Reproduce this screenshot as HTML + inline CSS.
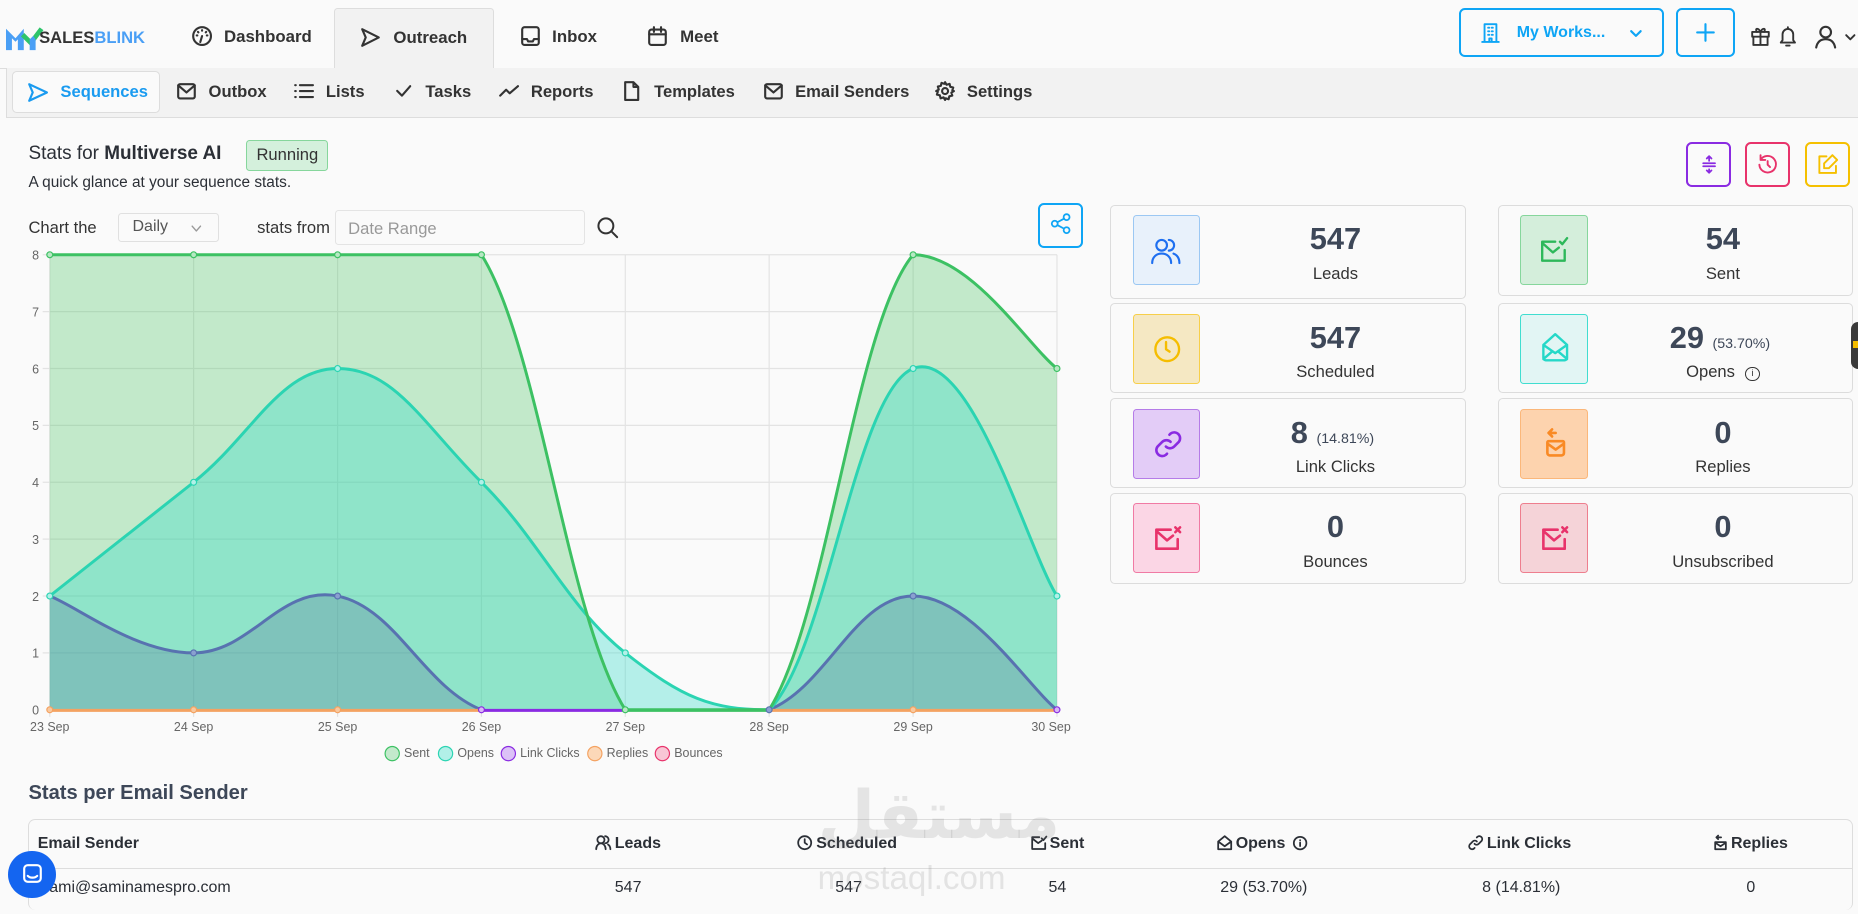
<!DOCTYPE html>
<html><head><meta charset="utf-8">
<style>
*{box-sizing:border-box;margin:0;padding:0}
html,body{width:1858px;height:914px;overflow:hidden;background:#fafafa}
#w{zoom:1.18495;width:1568px;height:771px;position:relative;font-family:"Liberation Sans",sans-serif;color:#2b2f36}
.a{position:absolute}
.t{font-size:14.2px;font-weight:bold;color:#333;position:absolute}
svg{overflow:visible}
.ic{position:absolute;fill:none;stroke:#333;stroke-width:1.8;stroke-linecap:round;stroke-linejoin:round}
.card{position:absolute;width:300px;border:1px solid #dcdcdc;border-radius:4px;background:#fafafa}
.ib{position:absolute;left:18px;top:8px;width:57px;height:59px;border-radius:3px;border:1.5px solid}
.ib svg{position:absolute;left:16px;top:17px}
.num{position:absolute;left:80px;right:0;text-align:center;top:13px;font-size:26px;font-weight:bold;color:#3d4758}
.num small{font-size:12px;font-weight:normal}
.lab{position:absolute;left:80px;right:0;text-align:center;top:49px;font-size:14px;color:#333}
.th{position:absolute;top:13px;font-size:13.5px;font-weight:bold;color:#2b2f36;white-space:nowrap}
.th svg{display:inline-block;vertical-align:-2px;margin-right:3px;fill:none;stroke:#2b2f36;stroke-width:1.5;stroke-linecap:round;stroke-linejoin:round}
.td{position:absolute;top:50px;font-size:13.5px;color:#2b2f36}
</style></head><body><div id="w">

<!-- top nav -->
<div class="a" style="left:0;top:57px;width:1568px;border-top:1px solid #ddd"></div>
<svg class="a" style="left:5px;top:20px" width="30" height="22" viewBox="0 0 30 22"><path d="M0 22V4l8 8 7-8v18h-5V13l-2 2-3-3v10z" fill="#4a9ff5"/><path d="M14 9l7 7L30 4" stroke="#2ec46a" stroke-width="4" fill="none"/><path d="M20 13l3-3 2 3v9h-5z" fill="#4a9ff5"/></svg>
<div class="a" style="left:33px;top:24px;font-size:14px;font-weight:900;letter-spacing:0"><span style="color:#333">SALES</span><span style="color:#4a9ff5">BLINK</span></div>
<svg class="ic" style="left:162px;top:22px" width="17" height="17" viewBox="0 0 17 17"><circle cx="8.5" cy="8.5" r="7.5"/><path d="M8.5 8.5l-1.5 5M4 8h.5M12.5 8h.5M8.5 3.5v.5M5 5l.4.4M12 5l-.4.4"/></svg>
<div class="t" style="left:189px;top:23px">Dashboard</div>
<div class="a" style="left:282px;top:7px;width:135px;height:51px;background:#f2f2f2;border:1px solid #ddd;border-bottom:none;border-radius:3px 3px 0 0"></div>
<svg class="ic" style="left:305px;top:24px" width="16" height="16" viewBox="0 0 16 16"><path d="M1 1l14 7-14 7 3-7z"/></svg>
<div class="t" style="left:332px;top:24px">Outreach</div>
<svg class="ic" style="left:440px;top:22px" width="16" height="17" viewBox="0 0 16 17"><rect x="1" y="1" width="14" height="15" rx="2"/><path d="M1 11h4l1 2h4l1-2h4"/></svg>
<div class="t" style="left:466px;top:23px">Inbox</div>
<svg class="ic" style="left:547px;top:22px" width="16" height="17" viewBox="0 0 16 17"><rect x="1" y="3" width="14" height="13" rx="2"/><path d="M1 7h14M5 1v4M11 1v4"/></svg>
<div class="t" style="left:574px;top:23px">Meet</div>

<div class="a" style="left:1231px;top:7px;width:173px;height:41px;border:2.5px solid #0ea5f5;border-radius:5px"></div>
<svg class="ic" style="left:1250px;top:19px;stroke:#0ea5f5;stroke-width:1.6" width="16" height="17" viewBox="0 0 16 17"><path d="M3 16V1h10v15M1 16h14M6 4h1M9 4h1M6 7h1M9 7h1M6 10h1M9 10h1M7 16v-3h2v3"/></svg>
<div class="a" style="left:1280px;top:20px;font-size:13.5px;font-weight:bold;color:#0ea5f5">My Works...</div>
<svg class="ic" style="left:1376px;top:25px;stroke:#0ea5f5" width="10" height="6" viewBox="0 0 10 6"><path d="M1 1l4 4 4-4"/></svg>
<div class="a" style="left:1414px;top:7px;width:50px;height:41px;border:2.5px solid #0ea5f5;border-radius:5px"></div>
<svg class="ic" style="left:1431px;top:19px;stroke:#0ea5f5" width="16" height="16" viewBox="0 0 16 16"><path d="M8 1v14M1 8h14"/></svg>
<svg class="ic" style="left:1478px;top:22px;stroke-width:1.6" width="16" height="17" viewBox="0 0 16 17"><rect x="1" y="5" width="14" height="4"/><path d="M2 9v7h12V9M8 5v11M8 5C6 1 3 2 5 5M8 5c2-4 5-3 3 0"/></svg>
<svg class="ic" style="left:1501px;top:22px;stroke-width:1.6" width="15" height="18" viewBox="0 0 15 18"><path d="M3 12V7a4.5 4.5 0 019 0v5l1.5 2h-12zM6 16.5h3M7.5 1v1"/></svg>
<svg class="ic" style="left:1532px;top:21px" width="18" height="20" viewBox="0 0 18 20"><circle cx="9" cy="6" r="4.5"/><path d="M1 19c1-5 4-7 8-7s7 2 8 7"/></svg>
<svg class="ic" style="left:1557px;top:29px;stroke-width:1.6" width="9" height="6" viewBox="0 0 9 6"><path d="M1 1l3.5 3.5L8 1"/></svg>

<!-- sub nav -->
<div class="a" style="left:5px;top:57px;width:1563px;height:43px;background:#f2f2f2;border-left:1px solid #ddd;border-bottom:1px solid #ddd"></div>
<div class="a" style="left:10px;top:60px;width:125px;height:35px;background:#fafafa;border:1px solid #ddd;border-radius:4px"></div>
<svg class="ic" style="left:24px;top:70px;stroke:#1a9bf0" width="17" height="16" viewBox="0 0 17 16"><path d="M1 1l15 7-15 7 3-7z"/></svg>
<div class="t" style="left:51px;top:69px;color:#1a9bf0;font-size:14px">Sequences</div>
<svg class="ic" style="left:149px;top:70px" width="16" height="14" viewBox="0 0 16 14"><rect x="1" y="1" width="14" height="12" rx="1.5"/><path d="M1 2l7 6 7-6"/></svg>
<div class="t" style="left:176px;top:69px;font-size:14px">Outbox</div>
<svg class="ic" style="left:248px;top:71px" width="17" height="12" viewBox="0 0 17 12"><path d="M5 1h11M5 6h11M5 11h11M1 1h.5M1 6h.5M1 11h.5"/></svg>
<div class="t" style="left:275px;top:69px;font-size:14px">Lists</div>
<svg class="ic" style="left:334px;top:72px" width="13" height="10" viewBox="0 0 13 10"><path d="M1 5l4 4 7-8"/></svg>
<div class="t" style="left:359px;top:69px;font-size:14px">Tasks</div>
<svg class="ic" style="left:421px;top:72px" width="18" height="10" viewBox="0 0 18 10"><path d="M1 9l5-5 3 3 7-6"/></svg>
<div class="t" style="left:448px;top:69px;font-size:14px">Reports</div>
<svg class="ic" style="left:527px;top:68px" width="13" height="17" viewBox="0 0 13 17"><path d="M1 1h7l4 4v11H1z M8 1v4h4"/></svg>
<div class="t" style="left:552px;top:69px;font-size:14px">Templates</div>
<svg class="ic" style="left:645px;top:70px" width="16" height="14" viewBox="0 0 16 14"><rect x="1" y="1" width="14" height="12" rx="1.5"/><path d="M1 2l7 6 7-6"/></svg>
<div class="t" style="left:671px;top:69px;font-size:14px">Email Senders</div>
<svg class="ic" style="left:789px;top:68px" width="17" height="17" viewBox="0 0 17 17"><circle cx="8.5" cy="8.5" r="2.5"/><path d="M8.5 1l1.3 2.2 2.5-.8.6 2.5 2.5.6-.8 2.5L16 8.5l-2.2 1.3.8 2.5-2.5.6-.6 2.5-2.5-.8L8.5 16l-1.3-2.2-2.5.8-.6-2.5-2.5-.6.8-2.5L1 8.5l2.2-1.3-.8-2.5 2.5-.6.6-2.5 2.5.8z"/></svg>
<div class="t" style="left:816px;top:69px;font-size:14px">Settings</div>

<!-- header -->
<div class="a" style="left:24px;top:121px;font-size:16px;color:#2b2f36">Stats for <b>Multiverse AI</b></div>
<div class="a" style="left:208px;top:118px;width:69px;height:26px;background:#d4f0dc;border:1.5px solid #86d69c;border-radius:3px;font-size:14px;text-align:center;line-height:23px;color:#333">Running</div>
<div class="a" style="left:24px;top:147px;font-size:13px;color:#2b2f36">A quick glance at your sequence stats.</div>

<div class="a" style="left:1423px;top:120px;width:38px;height:38px;border:2px solid #8a2be2;border-radius:5px"></div>
<svg class="ic" style="left:1436px;top:131px;stroke:#8a2be2;stroke-width:1.5" width="12" height="16" viewBox="0 0 12 16"><path d="M1 7h10M1 9.5h10M6 1v4M4 3l2-2 2 2M6 15v-3M4 13l2 2 2-2"/></svg>
<div class="a" style="left:1473px;top:120px;width:38px;height:38px;border:2px solid #e8336b;border-radius:5px"></div>
<svg class="ic" style="left:1483px;top:130px;stroke:#e8336b;stroke-width:1.6" width="18" height="18" viewBox="0 0 18 18"><path d="M3 5a7 7 0 11-1 4M3 1v4h4M9 6v3l2 2"/></svg>
<div class="a" style="left:1523px;top:120px;width:38px;height:38px;border:2px solid #f5c000;border-radius:5px"></div>
<svg class="ic" style="left:1533px;top:130px;stroke:#f5c000;stroke-width:1.6" width="18" height="18" viewBox="0 0 18 18"><path d="M8 2H2v14h14v-6M13 1l4 4-7 7H6V8z"/></svg>

<!-- chart controls -->
<div class="a" style="left:24px;top:184px;font-size:14px;color:#333">Chart the</div>
<div class="a" style="left:100px;top:180px;width:85px;height:24px;border:1px solid #e0e0e0;border-radius:3px;font-size:13.5px;color:#555;padding:3px 0 0 11px">Daily</div>
<svg class="ic" style="left:161px;top:190px;stroke:#999;stroke-width:1.2" width="9" height="6" viewBox="0 0 9 6"><path d="M1 1l3.5 4L8 1"/></svg>
<div class="a" style="left:217px;top:184px;font-size:14px;color:#333">stats from</div>
<div class="a" style="left:283px;top:177px;width:211px;height:30px;border:1px solid #e4e4e4;border-radius:3px;background:#fafafa;font-size:14px;color:#999;padding:7px 0 0 10px">Date Range</div>
<svg class="ic" style="left:504px;top:183px;stroke-width:1.7" width="18" height="18" viewBox="0 0 18 18"><circle cx="7.5" cy="7.5" r="6.3"/><path d="M12 12l5 5"/></svg>
<div class="a" style="left:876px;top:171px;width:38px;height:38px;border:2px solid #0ea5f5;border-radius:5px"></div>
<svg class="ic" style="left:886px;top:180px;stroke:#0ea5f5;stroke-width:1.5" width="18" height="18" viewBox="0 0 18 18"><circle cx="4" cy="9" r="2.5"/><circle cx="14" cy="3.5" r="2.5"/><circle cx="14" cy="14.5" r="2.5"/><path d="M6.2 7.8l5.6-3M6.2 10.2l5.6 3"/></svg>

<!-- chart -->
<svg class="a" style="left:0;top:0" width="930" height="650" viewBox="0 0 930 650">
<g stroke="#e3e3e3" stroke-width="1">
<path d="M36 215H892M36 263H892M36 311H892M36 359H892M36 407H892M36 455H892M36 503H892M36 551H892"/>
<path d="M42 215V605M163.4 215V605M284.9 215V605M406.3 215V605M527.7 215V605M649.1 215V605M770.6 215V605M892 215V605"/>
</g>
<g font-family="Liberation Sans" font-size="10.5" fill="#666" text-anchor="end">
<text x="33" y="219">8</text><text x="33" y="267">7</text><text x="33" y="315">6</text><text x="33" y="363">5</text><text x="33" y="411">4</text><text x="33" y="459">3</text><text x="33" y="507">2</text><text x="33" y="555">1</text><text x="33" y="603">0</text>
</g>
<g font-family="Liberation Sans" font-size="10.5" fill="#666" text-anchor="middle">
<text x="42" y="617">23 Sep</text><text x="163.4" y="617">24 Sep</text><text x="284.9" y="617">25 Sep</text><text x="406.3" y="617">26 Sep</text><text x="527.7" y="617">27 Sep</text><text x="649.1" y="617">28 Sep</text><text x="770.6" y="617">29 Sep</text><text x="887" y="617">30 Sep</text>
</g>
<path d="M42 215L406.3 215C454.9 291.8 479.1 522.2 527.7 599L649.1 599C697.7 522.2 722 272.6 770.6 215C819.2 215 867.7 291.8 892 311L892 599L42 599Z" fill="rgba(52,190,80,0.28)"/>
<path d="M42 503C66.3 483.8 114.8 445.4 163.4 407C212 368.6 236.3 311 284.9 311C333.5 311 357.7 359 406.3 407C454.9 455 479.1 512.6 527.7 551C576.3 589.4 600.5 599 649.1 599C697.7 551 722 330.2 770.6 311C819.2 291.8 867.7 464.6 892 503L892 599L42 599Z" fill="rgba(40,220,200,0.33)"/>
<path d="M42 503C66.3 512.6 114.8 551 163.4 551C212 551 236.3 493.4 284.9 503C333.5 512.6 357.7 579.8 406.3 599L649.1 599C697.7 579.8 722 503 770.6 503C819.2 503 867.7 579.8 892 599L42 599Z" fill="rgba(80,97,149,0.25)"/>
<path d="M42 503C66.3 512.6 114.8 551 163.4 551C212 551 236.3 493.4 284.9 503C333.5 512.6 357.7 579.8 406.3 599" fill="none" stroke="#5872b0" stroke-width="2.5"/>
<path d="M649.1 599C697.7 579.8 722 503 770.6 503C819.2 503 867.7 579.8 892 599" fill="none" stroke="#5872b0" stroke-width="2.5"/>
<path d="M42 503C66.3 483.8 114.8 445.4 163.4 407C212 368.6 236.3 311 284.9 311C333.5 311 357.7 359 406.3 407C454.9 455 479.1 512.6 527.7 551C576.3 589.4 600.5 599 649.1 599C697.7 551 722 330.2 770.6 311C819.2 291.8 867.7 464.6 892 503" fill="none" stroke="#2bd4b2" stroke-width="2.5"/>
<path d="M42 215L406.3 215C454.9 291.8 479.1 522.2 527.7 599L649.1 599C697.7 522.2 722 272.6 770.6 215C819.2 215 867.7 291.8 892 311" fill="none" stroke="#3cc163" stroke-width="2.5"/>
<path d="M42 599.5H406M649 599.5H892" stroke="#f4a261" stroke-width="2.5"/>
<path d="M406 599.5H527.7" stroke="#8a2be2" stroke-width="2.5"/>
<path d="M527.7 599.5H649" stroke="#3cc163" stroke-width="2.5"/>
<g fill="#b7e8c4" stroke="#3cc163" stroke-width="1">
<circle cx="42" cy="215" r="2.5"/><circle cx="163.4" cy="215" r="2.5"/><circle cx="284.9" cy="215" r="2.5"/><circle cx="406.3" cy="215" r="2.5"/><circle cx="770.6" cy="215" r="2.5"/><circle cx="892" cy="311" r="2.5"/><circle cx="527.7" cy="599" r="2.5"/></g>
<g fill="#b2f0e8" stroke="#2bd4b2" stroke-width="1">
<circle cx="163.4" cy="407" r="2.5"/><circle cx="284.9" cy="311" r="2.5"/><circle cx="406.3" cy="407" r="2.5"/><circle cx="527.7" cy="551" r="2.5"/><circle cx="770.6" cy="311" r="2.5"/><circle cx="892" cy="503" r="2.5"/><circle cx="42" cy="503" r="2.5"/></g>
<g fill="#8aa0d0" stroke="#5872b0" stroke-width="1"><circle cx="163.4" cy="551" r="2.5"/><circle cx="284.9" cy="503" r="2.5"/><circle cx="770.6" cy="503" r="2.5"/><circle cx="649.1" cy="599" r="2.5"/></g>
<g fill="#f8c9a0" stroke="#f4a261" stroke-width="1"><circle cx="42" cy="599" r="2.5"/><circle cx="163.4" cy="599" r="2.5"/><circle cx="284.9" cy="599" r="2.5"/><circle cx="770.6" cy="599" r="2.5"/></g>
<g fill="#d8b8f5" stroke="#8a2be2" stroke-width="1"><circle cx="406.3" cy="599" r="2.5"/><circle cx="892" cy="599" r="2.5"/></g>
<g font-family="Liberation Sans" font-size="10.5" fill="#666">
<circle cx="331" cy="636" r="6" fill="#c3e9cc" stroke="#3cc163"/><text x="341" y="639">Sent</text>
<circle cx="376" cy="636" r="6" fill="#b2f0e8" stroke="#2bd4b2"/><text x="386" y="639">Opens</text>
<circle cx="429" cy="636" r="6" fill="#dcc2f7" stroke="#8a2be2"/><text x="439" y="639">Link Clicks</text>
<circle cx="502" cy="636" r="6" fill="#fcd8b8" stroke="#f4a261"/><text x="512" y="639">Replies</text>
<circle cx="559" cy="636" r="6" fill="#f8c6d5" stroke="#e8336b"/><text x="569" y="639">Bounces</text>
</g>
</svg>

<!-- cards -->
<div class="card" style="left:937px;top:173px;height:79px"><div class="ib" style="background:#e8f1fb;border-color:#9cc8f3"><svg class="ic" style="stroke:#1e6ff0;stroke-width:1.8;left:15px" width="26" height="24" viewBox="0 0 26 24"><circle cx="9" cy="7" r="4.5"/><path d="M1 22c0-5 3.5-8 8-8s8 3 8 8M15 2.5a4.5 4.5 0 010 9M19 14c3 1 5 4 5 8"/></svg></div><div class="num">547</div><div class="lab">Leads</div></div>
<div class="card" style="left:1264px;top:173px;height:77px"><div class="ib" style="background:#d4eedb;border-color:#86d69c"><svg class="ic" style="stroke:#2db85a;stroke-width:2;left:17px" width="24" height="22" viewBox="0 0 24 22"><path d="M12 4H1v16h19V11M1 5l9 8 5-4M16 4l2 2 4-5"/></svg></div><div class="num">54</div><div class="lab">Sent</div></div>
<div class="card" style="left:937px;top:256px;height:76px"><div class="ib" style="background:#f5e8c3;border-color:#f7cf4a"><svg class="ic" style="stroke:#f5bd00;stroke-width:2;left:16px" width="24" height="24" viewBox="0 0 24 24"><circle cx="12" cy="12" r="10"/><path d="M11 6v6l3 2"/></svg></div><div class="num">547</div><div class="lab">Scheduled</div></div>
<div class="card" style="left:1264px;top:256px;height:76px"><div class="ib" style="background:#e2f5f4;border-color:#40ddd0"><svg class="ic" style="stroke:#25d8c8;stroke-width:2;left:17px;top:15px" width="24" height="24" viewBox="0 0 24 24"><path d="M2 10l10-9 10 9v11a2 2 0 01-2 2H4a2 2 0 01-2-2zM2 10l10 7 10-7M2 22l7-6M22 22l-7-6"/></svg></div><div class="num" style="left:75px">29 <small>(53.70%)</small></div><div class="lab">Opens <span style="display:inline-block;width:12px;height:12px;border:1.3px solid #333;border-radius:50%;font-size:8px;line-height:10px;vertical-align:1px;margin-left:5px">i</span></div></div>
<div class="card" style="left:937px;top:336px;height:76px"><div class="ib" style="background:#e3ccf7;border-color:#b57ce8"><svg class="ic" style="stroke:#8a2be2;stroke-width:2.2;left:17px;top:17px" width="24" height="24" viewBox="0 0 24 24"><path d="M10 14a5 5 0 007 0l4-4a5 5 0 00-7-7l-1 1M14 10a5 5 0 00-7 0l-4 4a5 5 0 007 7l1-1"/></svg></div><div class="num" style="left:75px">8 <small>(14.81%)</small></div><div class="lab">Link Clicks</div></div>
<div class="card" style="left:1264px;top:336px;height:76px"><div class="ib" style="background:#fdd3ae;border-color:#fbb77a"><svg class="ic" style="stroke:#f98a25;stroke-width:2.2;left:20px;top:15px" width="18" height="26" viewBox="0 0 18 26"><path d="M9 5H3M6 2L3 5l3 3M3 12h12a1 1 0 011 1v9a2 2 0 01-2 2H4a2 2 0 01-2-2v-9a1 1 0 011-1zM2 14l7 5 7-5"/></svg></div><div class="num">0</div><div class="lab">Replies</div></div>
<div class="card" style="left:937px;top:416px;height:77px"><div class="ib" style="background:#fbd6e5;border-color:#f07aa4"><svg class="ic" style="stroke:#e8336b;stroke-width:2.2;left:17px" width="24" height="24" viewBox="0 0 24 24"><path d="M14 4H2v16h18V12M2 5l9 8 5-4M18 2l4 4M22 2l-4 4"/></svg></div><div class="num">0</div><div class="lab">Bounces</div></div>
<div class="card" style="left:1264px;top:416px;height:77px"><div class="ib" style="background:#f5d3d8;border-color:#ee7e8e"><svg class="ic" style="stroke:#e8336b;stroke-width:2.2;left:17px" width="24" height="24" viewBox="0 0 24 24"><path d="M14 4H2v16h18V12M2 5l9 8 5-4M18 2l4 4M22 2l-4 4"/></svg></div><div class="num">0</div><div class="lab">Unsubscribed</div></div>
<div class="a" style="left:1562px;top:272px;width:10px;height:39px;background:#3a3a3a;border-radius:6px 0 0 6px"></div>
<div class="a" style="left:1564px;top:288px;width:4px;height:6px;background:#f5bd00"></div>

<!-- table -->
<div class="a" style="left:24px;top:660px;font-size:17px;font-weight:bold;color:#3d4758">Stats per Email Sender</div>
<div class="a" style="left:24px;top:691px;width:1540px;height:77px;border:1px solid #ddd;border-radius:6px;border-bottom:none">
<div class="a" style="left:0;top:41px;width:1538px;border-top:1px solid #ddd"></div>
<div class="th" style="left:7px">Email Sender</div>
<div class="th" style="left:477px"><svg width="14" height="13" viewBox="0 0 14 13"><circle cx="5" cy="4" r="3"/><path d="M1 12c0-3 2-5 4-5s4 2 4 5M8.5 1a3 3 0 010 6M11 8c1.5 1 2 2.5 2 4"/></svg>Leads</div>
<div class="th" style="left:648px"><svg width="13" height="13" viewBox="0 0 13 13"><circle cx="6.5" cy="6.5" r="5.5"/><path d="M6.5 3.5v3l2 1.5"/></svg>Scheduled</div>
<div class="th" style="left:845px"><svg width="13" height="12" viewBox="0 0 13 12"><path d="M7 1H1v10h11V6M1 2l5 4 3-2M9 2l1.5 1.5L13 0.5"/></svg>Sent</div>
<div class="th" style="left:1002px"><svg width="13" height="13" viewBox="0 0 13 13"><path d="M1 5.5L6.5 1 12 5.5V12H1zM1 5.5l5.5 4 5.5-4"/></svg>Opens <svg width="12" height="12" viewBox="0 0 12 12" style="margin-left:3px"><circle cx="6" cy="6" r="5.3"/><path d="M6 5.5v3M6 3.5v.2"/></svg></div>
<div class="th" style="left:1214px"><svg width="13" height="13" viewBox="0 0 13 13"><path d="M5.5 7.5a2.5 2.5 0 003.5 0l2.5-2.5a2.5 2.5 0 00-3.5-3.5l-.6.6M7.5 5.5a2.5 2.5 0 00-3.5 0L1.5 8a2.5 2.5 0 003.5 3.5l.6-.6"/></svg>Link Clicks</div>
<div class="th" style="left:1422px"><svg width="11" height="13" viewBox="0 0 11 13"><path d="M6 2H2M3.5 0.5L2 2l1.5 1.5M1 6h9v6H1zM1 6.5l4.5 3 4.5-3"/></svg>Replies</div>
<div class="td" style="left:10px">sami@saminamespro.com</div>
<div class="td" style="left:494px">547</div>
<div class="td" style="left:680px">547</div>
<div class="td" style="left:860px">54</div>
<div class="td" style="left:1005px">29 (53.70%)</div>
<div class="td" style="left:1226px">8 (14.81%)</div>
<div class="td" style="left:1449px">0</div>
</div>
<div class="a" style="left:690px;top:655px;font-size:56px;font-weight:bold;color:rgba(120,120,120,0.16);font-family:'DejaVu Sans',sans-serif">مستقل</div>
<div class="a" style="left:690px;top:726px;font-size:28px;color:rgba(120,120,120,0.18)">mostaql.com</div>
<div class="a" style="left:7px;top:718px;width:40px;height:40px;border-radius:50%;background:#1465f0"></div>
<svg class="ic" style="left:19px;top:729px;stroke:#fff;stroke-width:1.8" width="16" height="18" viewBox="0 0 16 18"><rect x="1" y="1" width="14" height="14" rx="3"/><path d="M4 10c2 2 6 2 8 0"/></svg>
</div></body></html>
